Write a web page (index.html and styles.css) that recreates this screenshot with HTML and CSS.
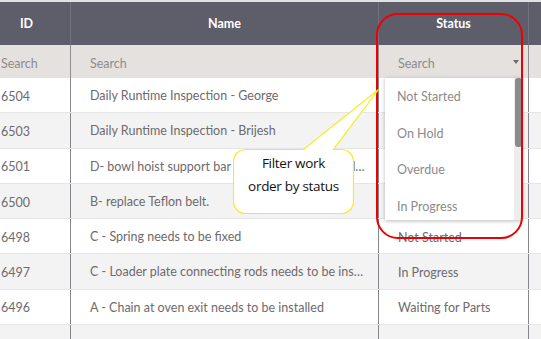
FILE: index.html
```html
<!DOCTYPE html>
<html>
<head>
<meta charset="utf-8">
<link rel="stylesheet" href="styles.css">
</head>
<body>
<div class="page">
  <div class="grid">
    <div class="row head">
      <div class="cell c-id">ID</div>
      <div class="cell c-name">Name</div>
      <div class="cell c-status">Status</div>
      <div class="cell c-extra"></div>
    </div>
    <div class="row search">
      <div class="cell c-id">Search</div>
      <div class="cell c-name">Search</div>
      <div class="cell c-status"><span>Search</span><span class="caret"></span></div>
      <div class="cell c-extra"></div>
    </div>
    <div class="row">
      <div class="cell c-id">6504</div>
      <div class="cell c-name">Daily Runtime Inspection - George</div>
      <div class="cell c-status"></div>
      <div class="cell c-extra"></div>
    </div>
    <div class="row alt">
      <div class="cell c-id">6503</div>
      <div class="cell c-name">Daily Runtime Inspection - Brijesh</div>
      <div class="cell c-status"></div>
      <div class="cell c-extra"></div>
    </div>
    <div class="row">
      <div class="cell c-id">6501</div>
      <div class="cell c-name">D- bowl hoist support bar frame needs to be welded</div>
      <div class="cell c-status"></div>
      <div class="cell c-extra"></div>
    </div>
    <div class="row alt">
      <div class="cell c-id">6500</div>
      <div class="cell c-name">B- replace Teflon belt.</div>
      <div class="cell c-status"></div>
      <div class="cell c-extra"></div>
    </div>
    <div class="row">
      <div class="cell c-id">6498</div>
      <div class="cell c-name">C - Spring needs to be fixed</div>
      <div class="cell c-status">Not Started</div>
      <div class="cell c-extra"></div>
    </div>
    <div class="row alt">
      <div class="cell c-id">6497</div>
      <div class="cell c-name">C - Loader plate connecting rods needs to be installed</div>
      <div class="cell c-status">In Progress</div>
      <div class="cell c-extra"></div>
    </div>
    <div class="row">
      <div class="cell c-id">6496</div>
      <div class="cell c-name">A - Chain at oven exit needs to be installed</div>
      <div class="cell c-status">Waiting for Parts</div>
      <div class="cell c-extra"></div>
    </div>
    <div class="row alt">
      <div class="cell c-id"></div>
      <div class="cell c-name"></div>
      <div class="cell c-status"></div>
      <div class="cell c-extra"></div>
    </div>
  </div>

  <div class="dropdown">
    <ul class="options">
      <li>Not Started</li>
      <li>On Hold</li>
      <li>Overdue</li>
      <li>In Progress</li>
    </ul>
    <div class="track"><div class="thumb"></div></div>
  </div>

  <div class="highlight"></div>

  <div class="callout">
    <svg class="bubble" width="150" height="130" viewBox="0 0 150 130">
      <path d="M12.5 60.5 H70.5 L145.5 0.5 L100.5 60.5 H108.5 A12 12 0 0 1 120.5 72.5 V112.5 A12 12 0 0 1 108.5 124.5 H12.5 A12 12 0 0 1 0.5 112.5 V72.5 A12 12 0 0 1 12.5 60.5 Z" fill="#ffffff" stroke="#f2ee1e" stroke-width="1.2"/>
    </svg>
    <div class="callout-text">Filter work<br>order by status</div>
  </div>
</div>
</body>
</html>
```

FILE: styles.css
```css
html, body {
  margin: 0;
  padding: 0;
  background: #ffffff;
}
.page {
  position: relative;
  width: 541px;
  height: 339px;
  overflow: hidden;
  font-family: Lato, "Open Sans", sans-serif;
  font-size: 12.5px;
  color: #6e6a6e;
}
.grid {
  margin-left: -17px;
  border-top: 2px solid #e2e2e2;
}
.row {
  display: grid;
  grid-template-columns: 88px 308px 150px 40px;
  height: 35.3px;
  box-sizing: border-box;
  border-bottom: 1px solid #e6e6e6;
  background: #ffffff;
}
.row.alt {
  background: #f3f3f3;
}
.cell {
  display: flex;
  align-items: center;
  padding: 2px 18px 0 18px;
  white-space: nowrap;
  overflow: hidden;
  border-right: 1px solid #86868c;
  box-sizing: border-box;
  min-width: 0;
}
.c-name {
  padding: 0 12px 0 19px;
  display: block;
  line-height: 36px;
  text-overflow: ellipsis;
}
.c-status {
  padding-left: 19px;
}
.c-extra {
  border-right: none;
}
.row.head {
  height: 43px;
  background: #5e5d6a;
  border-bottom: none;
  color: #ffffff;
  font-weight: bold;
  font-size: 12.5px;
}
.row.head .cell {
  justify-content: center;
  border-right-color: #72717d;
  line-height: 44px;
  padding: 0;
  text-align: center;
}
.row.head .c-name {
  display: flex;
}
.row.search {
  height: 33px;
  background: #e5e1df;
  border-bottom: none;
  color: #8e8b8c;
}
.row.search .cell {
  border-right-color: #8f8d90;
  padding-top: 3px;
}
.row.search .c-name {
  line-height: 31px;
}
.row.search .c-id {
  padding-left: 18px;
}
.row.search .c-status {
  justify-content: space-between;
  padding-right: 9px;
}
.caret {
  width: 0;
  height: 0;
  margin-top: -3px;
  border-left: 3.5px solid transparent;
  border-right: 3.5px solid transparent;
  border-top: 4px solid #6a6870;
}
.dropdown {
  position: absolute;
  left: 385px;
  top: 78px;
  width: 137px;
  height: 142px;
  background: #ffffff;
  box-shadow: 0 1px 4px rgba(0, 0, 0, 0.28);
  display: flex;
}
.options {
  list-style: none;
  margin: 0;
  padding: 0;
  flex: 1;
  color: #8c8a8c;
}
.options li {
  height: 36.5px;
  line-height: 37px;
  padding-left: 12px;
}
.track {
  width: 8px;
  background: #ededed;
  display: flex;
  flex-direction: column;
}
.thumb {
  height: 69px;
  background: #8a8a8a;
  border-radius: 3px;
  margin: 0 0.5px;
}
.highlight {
  position: absolute;
  left: 376px;
  top: 13px;
  width: 147px;
  height: 226px;
  box-sizing: border-box;
  border: 2px solid #ee0000;
  border-radius: 22px;
}
.callout {
  position: absolute;
  left: 233px;
  top: 89px;
  width: 150px;
  height: 130px;
}
.bubble {
  position: absolute;
  left: 0;
  top: 0;
}
.callout-text {
  position: absolute;
  left: 0;
  top: 61px;
  width: 121px;
  padding-top: 2px;
  text-align: center;
  font-family: "Open Sans", sans-serif;
  font-size: 13.5px;
  line-height: 23px;
  color: #111111;
  letter-spacing: -0.3px;
}
```
